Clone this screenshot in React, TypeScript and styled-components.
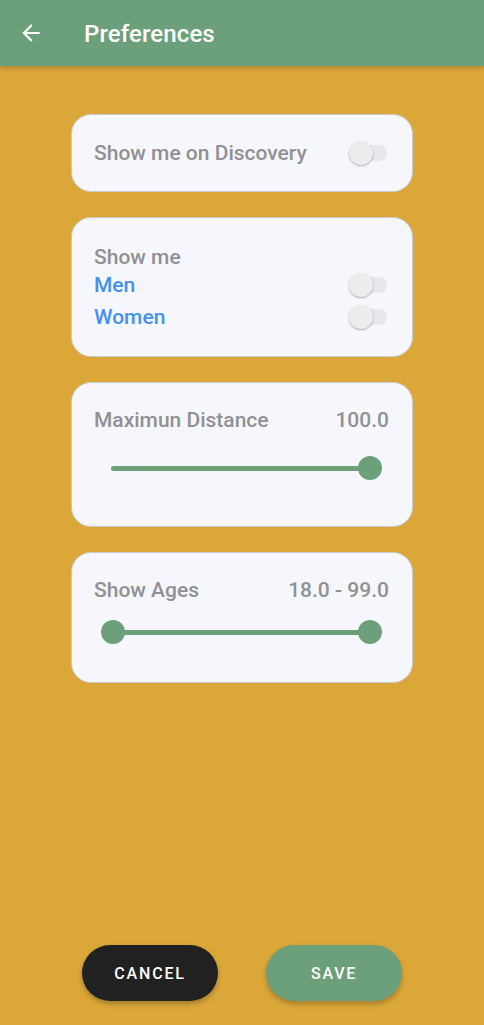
import React from "react";
import styled, { createGlobalStyle } from "styled-components";

const Global = createGlobalStyle`
  html, body { margin: 0; padding: 0; }
  body { font-family: Roboto, "Noto Sans", sans-serif; background: #dba739; }
  * { box-sizing: border-box; }
`;

const Page = styled.div`
  width: 484px;
  height: 1025px;
  display: flex;
  flex-direction: column;
  background: #dba739;
  overflow: hidden;
`;

const Header = styled.header`
  height: 66px;
  flex: none;
  background: #6ba07a;
  display: flex;
  align-items: center;
  padding-left: 18px;
  box-shadow: 0 2px 4px rgba(0, 0, 0, 0.22);
  position: relative;
  z-index: 1;
`;

const BackButton = styled.div`
  width: 26px;
  height: 26px;
  display: flex;
  align-items: center;
  justify-content: center;
  margin-right: 40px;
`;

const Title = styled.h1`
  margin: 0;
  color: #ffffff;
  font-size: 24px;
  font-weight: 500;
  letter-spacing: 0.1px;
  margin-top: 2px;
`;

const Content = styled.main`
  flex: 1;
  display: flex;
  flex-direction: column;
  align-items: center;
  gap: 25px;
  padding-top: 48px;
`;

const Card = styled.section<{ $pt: number; $pb: number; $h?: number }>`
  width: 342px;
  ${(p) => (p.$h ? `height: ${p.$h}px;` : "")}
  background: #f6f7fc;
  border: 1px solid #c9cad1;
  border-radius: 20px;
  padding: ${(p) => p.$pt}px 23px ${(p) => p.$pb}px 22px;
  display: flex;
  flex-direction: column;
  justify-content: center;
`;

const Row = styled.div<{ $h?: number }>`
  display: flex;
  align-items: center;
  justify-content: space-between;
  height: ${(p) => (p.$h ? `${p.$h}px` : "auto")};
`;

const Label = styled.span<{ $blue?: boolean }>`
  font-size: 21px;
  line-height: 24px;
  font-weight: 500;
  color: ${(p) => (p.$blue ? "#4292ee" : "#909095")};
`;

const SwitchWrap = styled.div`
  position: relative;
  width: 38px;
  height: 24px;
  margin-right: 2px;
  flex: none;
`;

const Track = styled.div`
  position: absolute;
  left: 4px;
  right: 0;
  top: 4px;
  height: 16px;
  border-radius: 8px;
  background: #e6e6ec;
`;

const Thumb = styled.div`
  position: absolute;
  left: 0;
  top: 0;
  width: 24px;
  height: 24px;
  border-radius: 50%;
  background: #ececec;
  box-shadow: 0 1px 2px rgba(0, 0, 0, 0.3);
`;

const Switch = () => (
  <SwitchWrap>
    <Track />
    <Thumb />
  </SwitchWrap>
);

const SliderBox = styled.div<{ $mt: number }>`
  position: relative;
  height: 24px;
  margin: ${(p) => p.$mt}px 7px 0 7px;
`;

const SliderTrack = styled.div<{ $left: number }>`
  position: absolute;
  left: ${(p) => p.$left}px;
  right: 12px;
  top: 9.5px;
  height: 5px;
  border-radius: 3px;
  background: #6ba07a;
`;

const SliderThumb = styled.div`
  position: absolute;
  top: 0;
  width: 24px;
  height: 24px;
  border-radius: 50%;
  background: #6ba07a;
`;

const Value = styled.span`
  font-size: 21px;
  line-height: 24px;
  font-weight: 500;
  color: #909095;
`;

const Footer = styled.footer`
  display: flex;
  justify-content: center;
  gap: 48px;
  padding-bottom: 24px;
`;

const Button = styled.button<{ $bg: string }>`
  width: 136px;
  height: 56px;
  border: none;
  border-radius: 28px;
  background: ${(p) => p.$bg};
  color: #ffffff;
  font-family: Roboto, sans-serif;
  font-size: 16px;
  font-weight: 500;
  letter-spacing: 1.8px;
  box-shadow: 0 3px 5px rgba(0, 0, 0, 0.25);
  cursor: pointer;
`;

export default function App() {
  return (
    <Page>
      <Global />
      <Header>
        <BackButton>
          <svg width="26" height="26" viewBox="0 0 24 24">
            <path d="M20 11H7.83l5.59-5.59L12 4l-8 8 8 8 1.41-1.41L7.83 13H20v-2z" fill="#fff" />
          </svg>
        </BackButton>
        <Title>Preferences</Title>
      </Header>
      <Content>
        <Card $pt={0} $pb={0} $h={78}>
          <Row>
            <Label>Show me on Discovery</Label>
            <Switch />
          </Row>
        </Card>
        <Card $pt={27} $pb={23}>
          <Label>Show me</Label>
          <Row $h={32}>
            <Label $blue>Men</Label>
            <Switch />
          </Row>
          <Row $h={32}>
            <Label $blue>Women</Label>
            <Switch />
          </Row>
        </Card>
        <Card $pt={25} $pb={46}>
          <Row>
            <Label>Maximun Distance</Label>
            <Value>100.0</Value>
          </Row>
          <SliderBox $mt={24}>
            <SliderTrack $left={10} />
            <SliderThumb style={{ right: 0 }} />
          </SliderBox>
        </Card>
        <Card $pt={25} $pb={38}>
          <Row>
            <Label>Show Ages</Label>
            <Value>18.0 - 99.0</Value>
          </Row>
          <SliderBox $mt={18}>
            <SliderTrack $left={12} />
            <SliderThumb style={{ left: 0 }} />
            <SliderThumb style={{ right: 0 }} />
          </SliderBox>
        </Card>
      </Content>
      <Footer>
        <Button $bg="#212121">CANCEL</Button>
        <Button $bg="#6ba07a">SAVE</Button>
      </Footer>
    </Page>
  );
}
